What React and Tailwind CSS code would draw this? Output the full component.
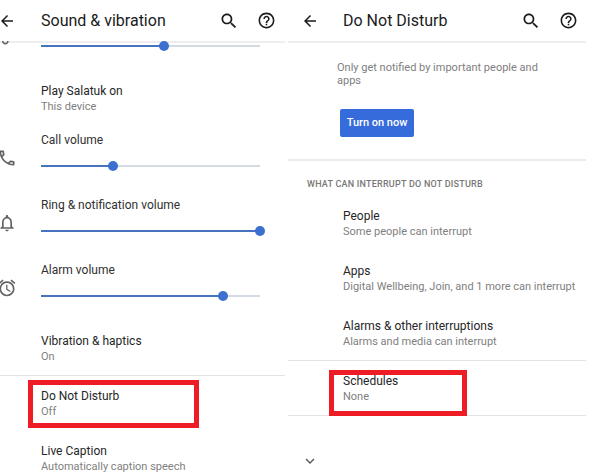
import React from "react";

const ICONS = {
  back: "M20 11H7.83l5.59-5.59L12 4l-8 8 8 8 1.41-1.41L7.83 13H20v-2z",
  search:
    "M15.5 14h-.79l-.28-.27C15.41 12.59 16 11.11 16 9.5 16 5.91 13.09 3 9.5 3S3 5.91 3 9.5 5.91 16 9.5 16c1.61 0 3.09-.59 4.23-1.57l.27.28v.79l5 4.99L20.49 19l-4.99-5zm-6 0C7.01 14 5 11.99 5 9.5S7.01 5 9.5 5 14 7.01 14 9.5 11.99 14 9.5 14z",
  help:
    "M11 18h2v-2h-2v2zm1-16C6.48 2 2 6.48 2 12s4.48 10 10 10 10-4.48 10-10S17.52 2 12 2zm0 18c-4.41 0-8-3.59-8-8s3.59-8 8-8 8 3.59 8 8-3.59 8-8 8zm0-14c-2.21 0-4 1.79-4 4h2c0-1.1.9-2 2-2s2 .9 2 2c0 2-3 1.75-3 5h2c0-2.25 3-2.5 3-5 0-2.21-1.79-4-4-4z",
  music:
    "M12 3v10.55c-.59-.34-1.27-.55-2-.55-2.21 0-4 1.79-4 4s1.79 4 4 4 4-1.79 4-4V7h4V3h-6zm-2 16c-1.1 0-2-.9-2-2s.9-2 2-2 2 .9 2 2-.9 2-2 2z",
  call:
    "M6.54 5c.06.89.21 1.76.45 2.59l-1.2 1.2c-.41-1.2-.67-2.47-.76-3.79h1.51m9.86 12.02c.85.24 1.72.39 2.6.45v1.49c-1.32-.09-2.59-.35-3.8-.75l1.2-1.19M7.5 3H4c-.55 0-1 .45-1 1 0 9.39 7.61 17 17 17 .55 0 1-.45 1-1v-3.49c0-.55-.45-1-1-1-1.24 0-2.45-.2-3.57-.57-.1-.04-.21-.05-.31-.05-.26 0-.51.1-.71.29l-2.2 2.2c-2.83-1.45-5.15-3.76-6.59-6.59l2.2-2.2c.28-.28.36-.67.25-1.02C8.7 6.45 8.5 5.25 8.5 4c0-.55-.45-1-1-1z",
  bell:
    "M12 22c1.1 0 2-.9 2-2h-4c0 1.1.9 2 2 2zm6-6v-5c0-3.07-1.63-5.64-4.5-6.32V4c0-.83-.67-1.5-1.5-1.5s-1.5.67-1.5 1.5v.68C7.64 5.36 6 7.92 6 11v5l-2 2v1h16v-1l-2-2zm-2 1H8v-6c0-2.48 1.51-4.5 4-4.5s4 2.02 4 4.5v6z",
  alarm:
    "M22 5.72l-4.6-3.86-1.29 1.53 4.6 3.86L22 5.72zM7.88 3.39L6.6 1.86 2 5.71l1.29 1.53 4.59-3.85zM12.5 8H11v6l4.75 2.85.75-1.23-4-2.37V8zM12 4c-4.97 0-9 4.03-9 9s4.02 9 9 9c4.97 0 9-4.03 9-9s-4.03-9-9-9zm0 16c-3.87 0-7-3.13-7-7s3.13-7 7-7 7 3.13 7 7-3.13 7-7 7z",
  chevron: "M7.41 8.59L12 13.17l4.59-4.58L18 10l-6 6-6-6 1.41-1.41z",
};

function Icon({ name, className }) {
  return (
    <svg viewBox="0 0 24 24" fill="currentColor" aria-hidden="true" className={className}>
      <path d={ICONS[name]} />
    </svg>
  );
}

function Header({ title, inset, end }) {
  return (
    <header className={`flex h-[41px] items-center text-[#1b1b1b] shadow-[0_2px_0_#eeeeee] ${end}`}>
      <div className={`shrink-0 ${inset}`}>
        <button type="button" aria-label="Back" className="block">
          <Icon name="back" className="size-[18px]" />
        </button>
      </div>
      <h1 className="flex-1 whitespace-nowrap text-base font-normal">{title}</h1>
      <div className="flex gap-[17px]">
        <button type="button" aria-label="Search" className="flex size-5 items-center justify-center">
          <Icon name="search" className="size-5" />
        </button>
        <button type="button" aria-label="Help" className="flex size-5 items-center justify-center">
          <Icon name="help" className="size-[19px]" />
        </button>
      </div>
    </header>
  );
}

function Slider({ id, label, value }) {
  return (
    <div className="grid items-center">
      <div className="col-start-1 row-start-1 h-0.5 bg-[#d3dae4]">
        <div className="h-0.5 bg-[#4673bd]" style={{ width: `${value}%` }} />
      </div>
      <input
        id={id}
        type="range"
        aria-label={label}
        defaultValue={value}
        className="col-start-1 row-start-1 -mx-[5px] h-2.5 appearance-none bg-transparent [&::-webkit-slider-thumb]:size-2.5 [&::-webkit-slider-thumb]:appearance-none [&::-webkit-slider-thumb]:rounded-full [&::-webkit-slider-thumb]:bg-[#3b6fd0]"
      />
    </div>
  );
}

function VolumeRow({ id, icon, label, value }) {
  return (
    <div className="flex h-[65px] pr-[25px]">
      <div className="w-[41px] shrink-0 pt-[23px] text-[#636363]">
        <Icon name={icon} className="-ml-[3px] size-5" />
      </div>
      <div className="flex-1 pt-2">
        <label htmlFor={id} className="mb-[13px] block text-xs leading-[15px] text-[#303030]">
          {label}
        </label>
        <Slider id={id} value={value} />
      </div>
    </div>
  );
}

function Row({ title, detail, inset, divided, mark }) {
  return (
    <a href="#" className={`relative block h-[55px] pt-[14px] ${inset}`}>
      {divided && <span className="absolute inset-x-0 top-0 h-px bg-[#e3e3e3]" />}
      <span className="block text-xs leading-[15px] text-[#262626]">{title}</span>
      <span className="block text-[11px] leading-[15px] text-[#808080]">{detail}</span>
      {mark && <span className={`absolute border-5 border-[#ee1c24] ${mark}`} />}
    </a>
  );
}

function SoundPanel() {
  return (
    <section className="min-w-0">
      <Header title="Sound & vibration" inset="w-[41px] [&>button]:-ml-0.5" end="pr-[9px]" />
      <div className="flex h-[29px] pr-[25px]">
        <div className="flex h-1 w-[41px] shrink-0 items-end overflow-hidden text-[#636363]">
          <Icon name="music" className="-mb-0.5 -ml-[3px] size-5 shrink-0" />
        </div>
        <div className="flex-1">
          <Slider id="media" label="Media volume" value={56} />
        </div>
      </div>
      <Row title="Play Salatuk on" detail="This device" inset="pl-[41px]" />
      <VolumeRow id="call" icon="call" label="Call volume" value={33} />
      <VolumeRow id="ring" icon="bell" label="Ring & notification volume" value={100} />
      <VolumeRow id="alarm" icon="alarm" label="Alarm volume" value={83} />
      <Row title="Vibration & haptics" detail="On" inset="pl-[41px]" />
      <Row
        title="Do Not Disturb"
        detail="Off"
        inset="pl-[41px]"
        divided
        mark="left-7 top-[5px] h-12 w-[171px]"
      />
      <Row title="Live Caption" detail="Automatically caption speech" inset="pl-[41px]" />
    </section>
  );
}

function DisturbPanel() {
  return (
    <section className="min-w-0">
      <Header title="Do Not Disturb" inset="w-[55px] pl-[13px]" end="pr-2" />
      <div className="h-[118px] pl-[49px] pt-5">
        <p className="max-w-[210px] text-[11px] leading-[13px] text-[#808080]">
          Only get notified by important people and apps
        </p>
        <button
          type="button"
          className="ml-[3px] mt-[22px] h-7 w-[74px] whitespace-nowrap rounded-xs bg-[#356bdb] text-[11px] font-medium text-white"
        >
          Turn on now
        </button>
      </div>
      <h2 className="h-9 border-t-2 border-[#ebebeb] pl-[19px] pt-4 text-[9px] font-medium uppercase leading-[15px] tracking-wide text-[#777777]">
        What can interrupt Do Not Disturb
      </h2>
      <Row title="People" detail="Some people can interrupt" inset="pl-[55px]" />
      <Row title="Apps" detail="Digital Wellbeing, Join, and 1 more can interrupt" inset="pl-[55px]" />
      <Row title="Alarms & other interruptions" detail="Alarms and media can interrupt" inset="pl-[55px]" />
      <Row
        title="Schedules"
        detail="None"
        inset="pl-[55px]"
        divided
        mark="left-[41px] top-2.5 h-[46px] w-[138px]"
      />
      <div className="border-t border-[#e3e3e3] pl-[13px] pt-9">
        <button type="button" aria-label="Show more" className="block text-[#5f5f5f]">
          <Icon name="chevron" className="size-[18px]" />
        </button>
      </div>
    </section>
  );
}

export default function App() {
  return (
    <main className="grid h-screen grid-cols-[285fr_298fr] gap-[3px] overflow-hidden bg-white pr-[7px] font-[Roboto,'Liberation_Sans',sans-serif]">
      <SoundPanel />
      <DisturbPanel />
    </main>
  );
}
